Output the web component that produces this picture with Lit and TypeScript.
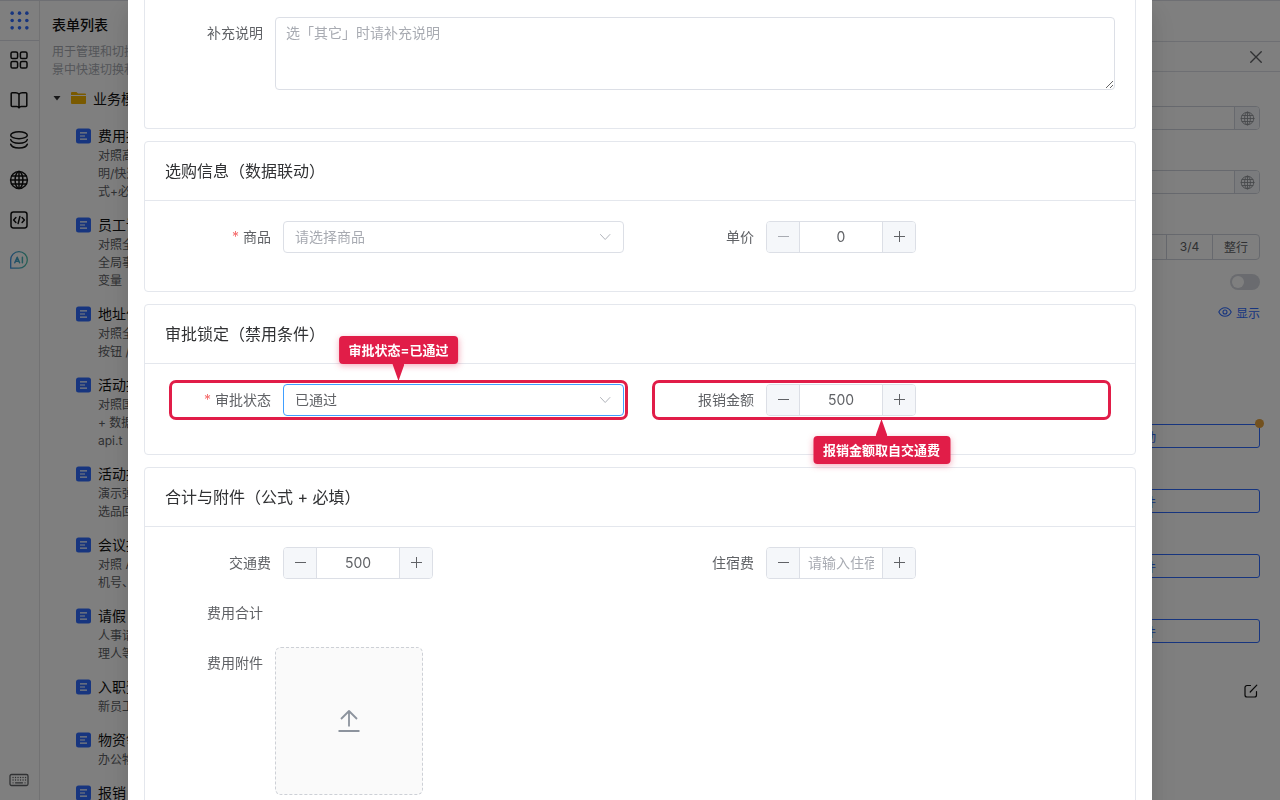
import { LitElement, html, css, svg, nothing, TemplateResult } from "lit";
import { customElement, state } from "lit/decorators.js";
import { classMap } from "lit/directives/class-map.js";

interface FormEntry {
  title: string;
  lines: string[];
}

const FORMS: FormEntry[] = [
  { title: "费用报", lines: ["对照高", "明/快速", "式+必"] },
  { title: "员工请", lines: ["对照全", "全局事", "变量"] },
  { title: "地址信", lines: ["对照全", "按钮 /"] },
  { title: "活动报", lines: ["对照国", "+ 数据", "api.t"] },
  { title: "活动报", lines: ["演示弹", "选品回"] },
  { title: "会议报", lines: ["对照 A", "机号、"] },
  { title: "请假", lines: ["人事请", "理人等"] },
  { title: "入职登", lines: ["新员工"] },
  { title: "物资领", lines: ["办公物"] },
  { title: "报销", lines: [] },
];

const line = (body: TemplateResult, size = 20, width = 1.5, box = 20) => html`<svg
  class="icon"
  width=${size}
  height=${size}
  viewBox="0 0 ${box} ${box}"
  fill="none"
  stroke="currentColor"
  stroke-width=${width}
  stroke-linecap="round"
  stroke-linejoin="round"
  aria-hidden="true"
>
  ${body}
</svg>`;

const globeShape = svg`<circle cx="10" cy="10" r="8.4"/><ellipse cx="10" cy="10" rx="3.9" ry="8.4"/><path d="M10 1.6v16.8M1.6 10h16.8M2.8 6h14.4M2.8 14h14.4"/>`;

const RAIL: { name: string; icon: TemplateResult }[] = [
  {
    name: "组件",
    icon: line(svg`<rect x="2" y="2" width="6.6" height="6.6" rx="1.6"/><rect x="11.4" y="2" width="6.6" height="6.6" rx="1.6"/><rect x="2" y="11.4" width="6.6" height="6.6" rx="1.6"/><rect x="11.4" y="11.4" width="6.6" height="6.6" rx="1.6"/>`),
  },
  {
    name: "文档",
    icon: line(svg`<path d="M10 4.2C9 3 8 2.8 6.8 2.8H3.2a1 1 0 0 0-1 1v11.8a1 1 0 0 0 1 1h4.6c1 0 1.8.4 2.2 1.2.4-.8 1.2-1.2 2.2-1.2h4.6a1 1 0 0 0 1-1V3.8a1 1 0 0 0-1-1h-3.6C12 2.8 11 3 10 4.2zM10 4.2v13.4"/>`),
  },
  {
    name: "数据",
    icon: line(svg`<ellipse cx="10" cy="5.2" rx="8.3" ry="3.5"/><path d="M1.7 9.6c.6 2.200 4 3.600 8.300 3.600s7.700-1.400 8.300-3.600M1.700 14.200c.6 2.300 4 3.700 8.300 3.700s7.700-1.400 8.300-3.700"/>`),
  },
  { name: "国际化", icon: line(globeShape) },
  {
    name: "源码",
    icon: line(svg`<rect x="2" y="2" width="16" height="16" rx="2.4"/><path d="M6.9 7.6L4.6 10l2.300 2.400M13.100 7.600l2.300 2.400-2.300 2.400M10.900 6.400L9.100 13.600"/>`),
  },
];

const chevron = line(svg`<path d="M2.5 4.500l4.700 5 4.700-5"/>`, 14, 1, 14);
const minus = line(svg`<path stroke-linecap="butt" d="M2 6.500h11"/>`, 14, 1, 14);
const plus = line(svg`<path stroke-linecap="butt" d="M2 6.500h11M7.500 1v11"/>`, 14, 1, 14);

@customElement("app-root")
export class AppRoot extends LitElement {
  static styles = css`
    :host {
      display: block;
      height: 100vh;
      overflow: hidden;
      background: #fff;
      color: #303133;
      font-family: Inter, "Noto Sans CJK SC", sans-serif;
      font-size: 14px;
    }
    * {
      box-sizing: border-box;
    }
    button,
    input,
    select,
    textarea {
      font: inherit;
      color: inherit;
      margin: 0;
    }
    button {
      background: none;
      border: 0;
      padding: 0;
      cursor: pointer;
    }
    h1,
    h2,
    h3,
    p,
    ul {
      margin: 0;
      padding: 0;
      font-weight: 400;
      list-style: none;
    }
    .icon {
      display: block;
      flex: none;
    }

    /* workspace */
    .shell {
      display: flex;
      height: 100%;
      border-top: 1px solid #dcdfe6;
    }
    .rail {
      width: 40px;
      border-right: 1px solid #e4e4e7;
      display: flex;
      flex-direction: column;
      flex: none;
      color: #111;
    }
    .rail button {
      height: 40px;
      padding: 0 1px 2px 0;
      display: grid;
      place-items: center;
    }
    .rail .apps {
      border-bottom: 1px solid #dcdfe6;
      padding-bottom: 0;
      color: #2f6bff;
    }
    .rail .keys {
      margin-top: auto;
      padding-bottom: 0;
      color: #606266;
    }
    .side {
      width: 240px;
      flex: none;
      padding: 13px 12px 0;
      white-space: nowrap;
      overflow: hidden;
    }
    .side h1 {
      font-size: 14px;
      line-height: 22px;
      font-weight: 500;
      color: #111;
    }
    .hint {
      margin-top: 7px;
      font-size: 12px;
      line-height: 18px;
      color: #a8abb2;
    }
    .folder {
      display: flex;
      align-items: center;
      height: 32px;
      margin: 3px 0 5px;
      color: #111;
    }
    .folder .dir {
      margin: 0 7px 0 9px;
    }
    .form {
      display: flex;
      gap: 7px;
      padding: 6px 0 7px 24px;
    }
    .form .icon {
      margin-top: 3px;
    }
    .form h2 {
      font-size: 14px;
      line-height: 22px;
      color: #111;
    }
    .form p {
      font-size: 12px;
      line-height: 18px;
      color: #606266;
    }
    .canvas {
      flex: 1;
      background: #fff;
    }
    .topbar {
      height: 41px;
      border-bottom: 1px solid #dcdfe6;
    }
    .props {
      width: 320px;
      flex: none;
      font-size: 12px;
    }
    .props-head {
      height: 30px;
      border-bottom: 1px solid #dcdfe6;
      display: flex;
      align-items: center;
      justify-content: flex-end;
      padding-right: 17px;
      color: #606266;
    }
    .props-body {
      padding: 34px 20px 0;
      display: flex;
      flex-direction: column;
    }
    .affix {
      display: flex;
      height: 24px;
      margin-bottom: 40px;
      border: 1px solid #cfd3dc;
      border-radius: 4px;
      overflow: hidden;
    }
    .affix input {
      flex: 1;
      min-width: 0;
      border: 0;
      outline: 0;
    }
    .affix button {
      width: 25px;
      border-left: 1px solid #cfd3dc;
      background: #f5f7fa;
      color: #909399;
      display: grid;
      place-items: center;
    }
    .segments {
      display: flex;
      height: 26px;
      border: 1px solid #cfd3dc;
      border-radius: 4px;
      justify-content: flex-end;
    }
    .segments button {
      min-width: 46px;
      padding: 0 11px 1px;
      border-left: 1px solid #cfd3dc;
      color: #606266;
    }
    .segments button:first-child {
      flex: 1;
      border-left: 0;
    }
    .switch {
      appearance: none;
      width: 30px;
      height: 16px;
      margin: 14px 0;
      border-radius: 8px;
      background: #d4d7de;
      align-self: flex-end;
      display: flex;
      padding: 2px;
    }
    .switch::before {
      content: "";
      width: 12px;
      height: 12px;
      border-radius: 50%;
      background: #fff;
    }
    .show {
      align-self: flex-end;
      display: flex;
      align-items: center;
      gap: 4px;
      height: 16px;
      color: #2f6bff;
      text-decoration: none;
    }
    .rules {
      display: flex;
      flex-direction: column;
      gap: 41px;
      margin-top: 104px;
    }
    .rules button {
      height: 24px;
      border: 1px solid #2f6bff;
      border-radius: 3px;
      color: #2f6bff;
      position: relative;
    }
    .dot {
      position: absolute;
      top: -6px;
      right: -5px;
      width: 9px;
      height: 9px;
      border-radius: 50%;
      background: #e6a23c;
    }
    .rules .edit {
      border: 0;
      color: #111;
      height: 14px;
      align-self: flex-end;
      margin-right: 2px;
    }

    /* dialog */
    .mask {
      position: fixed;
      inset: 0;
      overflow: auto;
      scrollbar-width: none;
      background: rgba(0, 0, 0, 0.5);
      padding: 0 10%;
    }
    .dialog {
      background: #fff;
      padding: 0 16px 16px;
      display: flex;
      flex-direction: column;
      gap: 12px;
      box-shadow: 0 12px 32px 4px rgba(0, 0, 0, 0.06), 0 8px 20px rgba(0, 0, 0, 0.1);
    }
    .card {
      border: 1px solid #e4e7ed;
      border-radius: 4px;
    }
    .card.cut {
      border-top: 0;
      border-radius: 0 0 4px 4px;
    }
    .card h3 {
      padding: 18px 20px;
      font-size: 16px;
      line-height: 22px;
      border-bottom: 1px solid #e4e7ed;
    }
    .body {
      padding: 20px;
    }
    .cut .body {
      padding-top: 17px;
    }
    .pair {
      display: grid;
      grid-template-columns: 1fr 1fr;
      gap: 32px;
      padding: 0 8px;
    }
    .item {
      display: flex;
      position: relative;
      margin-bottom: 18px;
      min-height: 32px;
      color: #606266;
    }
    .item > label {
      width: 110px;
      flex: none;
      padding-right: 12px;
      text-align: right;
      line-height: 32px;
    }
    .required::before {
      content: "*";
      color: #f56c6c;
      margin-right: 4px;
    }
    textarea {
      flex: 1;
      height: 73px;
      padding: 4px 10px;
      line-height: 21px;
      border: 1px solid #dcdfe6;
      border-radius: 4px;
      outline: 0;
      resize: vertical;
      display: block;
    }
    ::placeholder {
      color: #a8abb2;
      opacity: 1;
    }
    .select {
      flex: 1;
      display: grid;
      align-items: center;
      height: 32px;
      color: #b1b4bb;
    }
    .select select,
    .select .icon {
      grid-area: 1 / 1;
    }
    .select .icon {
      justify-self: end;
      margin-right: 12px;
      pointer-events: none;
    }
    select {
      appearance: none;
      width: 100%;
      height: 32px;
      padding: 0 32px 2px 11px;
      border: 1px solid #dcdfe6;
      border-radius: 4px;
      background: #fff;
      color: #606266;
      outline: 0;
    }
    select.blank {
      color: #a8abb2;
    }
    select.active {
      border-color: #409eff;
    }
    .stepper {
      display: flex;
      width: 150px;
      height: 32px;
      border: 1px solid #dcdfe6;
      border-radius: 4px;
      overflow: hidden;
    }
    .stepper button {
      width: 32px;
      background: #f5f7fa;
      color: #606266;
      display: grid;
      place-items: center;
    }
    .stepper button:disabled {
      color: #a8abb2;
    }
    .stepper input {
      flex: 1;
      min-width: 0;
      padding: 0 8px 1px;
      text-align: center;
      border: 0;
      border-left: 1px solid #dcdfe6;
      border-right: 1px solid #dcdfe6;
      outline: 0;
    }
    .upload {
      width: 148px;
      height: 148px;
      border: 1px dashed #cdd0d6;
      border-radius: 6px;
      background: #fafafa;
      color: #8c939d;
      display: grid;
      place-items: center;
    }

    /* callouts */
    .marked {
      outline: 3px solid #e11d48;
      outline-offset: 1px;
      border-radius: 3px;
    }
    .callout {
      position: absolute;
      left: 50%;
      transform: translateX(-50%);
      display: flex;
      flex-direction: column;
      align-items: center;
      z-index: 1;
      color: #fff;
      font-size: 13px;
      font-weight: 700;
      line-height: 28px;
      white-space: nowrap;
      pointer-events: none;
    }
    .callout.above {
      bottom: calc(100% + 3px);
    }
    .callout.below {
      top: calc(100% + 3px);
      flex-direction: column-reverse;
    }
    .callout span {
      padding: 0 10px;
      border-radius: 4px;
      background: #e11d48;
      box-shadow: 0 2px 6px rgba(225, 29, 72, 0.35);
    }
    .callout i {
      width: 12px;
      height: 17px;
      background: #e11d48;
      clip-path: polygon(0 0, 100% 0, 50% 100%);
    }
    .callout.below i {
      clip-path: polygon(50% 0, 100% 100%, 0 100%);
    }
  `;

  @state() private amounts: Record<string, string> = {
    price: "0",
    claim: "500",
    traffic: "500",
    hotel: "",
  };

  private step(key: string, delta: number) {
    const next = Math.max(0, Number(this.amounts[key] || 0) + delta);
    this.amounts = { ...this.amounts, [key]: String(next) };
  }

  private stepper(key: string, placeholder = "") {
    const value = this.amounts[key];
    return html`<div class="stepper">
      <button
        type="button"
        aria-label="减少"
        ?disabled=${value === "0"}
        @click=${() => this.step(key, -1)}
      >
        ${minus}
      </button>
      <input id=${key} type="text" inputmode="decimal" .value=${value} placeholder=${placeholder} />
      <button type="button" aria-label="增加" @click=${() => this.step(key, 1)}>${plus}</button>
    </div>`;
  }

  private select(id: string, text: string, cls: "blank" | "active") {
    return html`<div class="select">
      <select id=${id} class=${cls}>
        <option>${text}</option>
      </select>
      ${chevron}
    </div>`;
  }

  private item(
    id: string,
    label: string,
    control: unknown,
    opts: { required?: boolean; note?: string; side?: "above" | "below" } = {}
  ) {
    return html`<div class=${classMap({ item: true, marked: !!opts.note })}>
      <label for=${id} class=${classMap({ required: !!opts.required })}>${label}</label>
      ${control}
      ${opts.note
        ? html`<div class="callout ${opts.side}"><span>${opts.note}</span><i></i></div>`
        : nothing}
    </div>`;
  }

  private renderShell() {
    const dots = [3, 10, 17].flatMap((y) =>
      [3, 10, 17].map((x) => svg`<circle cx=${x} cy=${y} r="1.7"/>`)
    );
    return html`<div class="shell">
      <nav class="rail">
        <button class="apps" aria-label="应用">
          <svg class="icon" width="21" height="21" viewBox="0 0 20 20" fill="currentColor">${dots}</svg>
        </button>
        ${RAIL.map((r) => html`<button aria-label=${r.name}>${r.icon}</button>`)}
        <button aria-label="智能助手">
          <svg class="icon" width="20" height="20" viewBox="0 0 20 20" fill="none" stroke-linecap="round" stroke-linejoin="round">
            <defs>
              <linearGradient id="ai" gradientUnits="userSpaceOnUse" x1="2" y1="0" x2="18" y2="0">
                <stop offset="0" stop-color="#3f94e0" />
                <stop offset="1" stop-color="#4cc0a8" />
              </linearGradient>
            </defs>
            <path stroke="url(#ai)" stroke-width="1.3" d="M1.700 18.200V10a8.300 8.300 0 1 1 8.300 8.200z" />
            <path stroke="url(#ai)" stroke-width="1.5" d="M5.800 12.800L8.200 7.200l2.400 5.600M6.700 11.200h3M13.400 7.200v5.600" />
          </svg>
        </button>
        <button class="keys" aria-label="快捷键">
          ${line(svg`<rect x="1" y="4.500" width="18" height="11" rx="1.500"/><path stroke-width="1.300" stroke-dasharray="0.100 2.400" d="M4 7.500h13M4 10h13"/><path stroke-width="1.200" d="M6.500 12.800h7M4 12.800h.1M16 12.800h.1"/>`, 20, 1.3)}
        </button>
      </nav>
      <aside class="side">
        <h1>表单列表</h1>
        <div class="hint">
          <p>用于管理和切换</p>
          <p>景中快速切换和</p>
        </div>
        <div class="folder">
          <svg class="icon" width="10" height="10" viewBox="0 0 10 10"><path fill="#303133" d="M1.500 3h7L5 7.500z" /></svg>
          <svg class="icon dir" width="15" height="14" viewBox="0 0 15 14">
            <path fill="#f5b400" d="M0 2a1 1 0 0 1 1-1h4.500L7 2.600h7a1 1 0 0 1 1 1V4H0zM0 5h15v7a1 1 0 0 1-1 1H1a1 1 0 0 1-1-1z" />
          </svg>
          业务模
        </div>
        <ul>
          ${FORMS.map(
            (f) => html`<li class="form">
              <svg class="icon" width="15" height="16" viewBox="0 0 15 16">
                <rect y="0.500" width="15" height="15" rx="2.500" fill="#2f6bff" />
                <path stroke="#fff" stroke-width="1.200" d="M4 4.800h7M4 8h5M4 11.200h7" />
              </svg>
              <div>
                <h2>${f.title}</h2>
                ${f.lines.map((l) => html`<p>${l}</p>`)}
              </div>
            </li>`
          )}
        </ul>
      </aside>
      <div class="canvas"><div class="topbar"></div></div>
      <aside class="props">
        <div class="topbar"></div>
        <div class="props-head">
          <button aria-label="关闭">${line(svg`<path d="M1.500 1.500l9 9M10.500 1.500l-9 9"/>`, 14, 1.2, 12)}</button>
        </div>
        <div class="props-body">
          ${["字段标题", "字段提示"].map(
            (name) => html`<div class="affix">
              <input type="text" aria-label=${name} />
              <button aria-label="多语言">${line(globeShape, 15, 1.2)}</button>
            </div>`
          )}
          <div class="segments">
            <button aria-label="半行"></button><button>3/4</button><button>整行</button>
          </div>
          <input class="switch" type="checkbox" role="switch" aria-label="隐藏标签" />
          <a class="show" href="#">
            ${line(svg`<path d="M.8 7C2.200 4.200 4.400 2.800 7 2.800S11.800 4.200 13.200 7C11.800 9.800 9.600 11.200 7 11.200S2.200 9.800.8 7z"/><circle cx="7" cy="7" r="2"/>`, 14, 1.1, 14)}显示
          </a>
          <div class="rules">
            <button>设置数据联动<span class="dot"></span></button>
            <button>设置隐藏条件</button>
            <button>设置禁用条件</button>
            <button>设置必填条件</button>
            <button class="edit" aria-label="编辑">
              ${line(svg`<path d="M6.500 1.500H3a2 2 0 0 0-2 2V11a2 2 0 0 0 2 2h7.500a2 2 0 0 0 2-2V7.500M6.200 8L12.800 1.200"/>`, 14, 1.2, 14)}
            </button>
          </div>
        </div>
      </aside>
    </div>`;
  }

  render() {
    return html`${this.renderShell()}
      <div class="mask">
        <form class="dialog" role="dialog" aria-label="表单预览">
          <section class="card cut">
            <div class="body">
              ${this.item("remark", "补充说明", html`<textarea id="remark" placeholder="选「其它」时请补充说明"></textarea>`)}
            </div>
          </section>
          <section class="card">
            <h3>选购信息（数据联动）</h3>
            <div class="body">
              <div class="pair">
                ${this.item("goods", "商品", this.select("goods", "请选择商品", "blank"), { required: true })}
                ${this.item("price", "单价", this.stepper("price"))}
              </div>
            </div>
          </section>
          <section class="card">
            <h3>审批锁定（禁用条件）</h3>
            <div class="body">
              <div class="pair">
                ${this.item("status", "审批状态", this.select("status", "已通过", "active"), {
                  required: true,
                  note: "审批状态=已通过",
                  side: "above",
                })}
                ${this.item("claim", "报销金额", this.stepper("claim"), {
                  note: "报销金额取自交通费",
                  side: "below",
                })}
              </div>
            </div>
          </section>
          <section class="card">
            <h3>合计与附件（公式 + 必填）</h3>
            <div class="body">
              <div class="pair">
                ${this.item("traffic", "交通费", this.stepper("traffic"))}
                ${this.item("hotel", "住宿费", this.stepper("hotel", "请输入住宿费"))}
              </div>
              ${this.item("total", "费用合计", html`<output id="total"></output>`)}
              ${this.item(
                "files",
                "费用附件",
                html`<button id="files" type="button" class="upload">
                  ${line(svg`<path stroke-linecap="butt" d="M14 19.500V4.500M6 12L14 4l8 8M3.500 24h21"/>`, 28, 1.8, 28)}
                </button>`
              )}
            </div>
          </section>
        </form>
      </div>`;
  }
}
